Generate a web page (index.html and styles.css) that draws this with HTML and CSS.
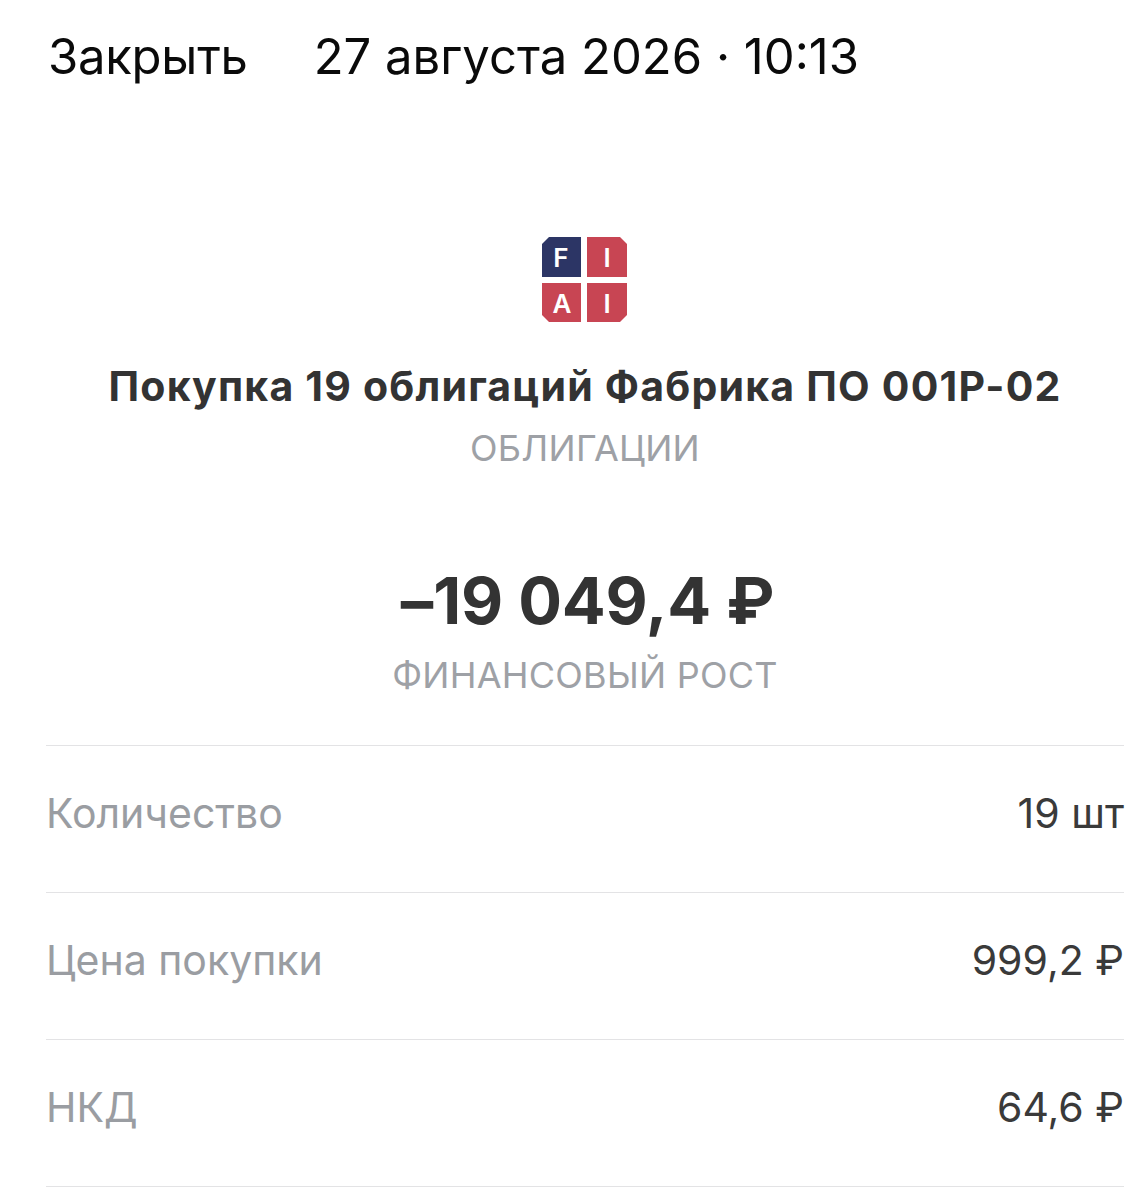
FILE: index.html
```html
<!DOCTYPE html>
<html lang="ru">
<head>
<meta charset="utf-8">
<title>Операция</title>
<link rel="stylesheet" href="styles.css">
</head>
<body>
<div class="page">
  <header class="top">
    <span class="close">Закрыть</span>
    <span class="date">27 августа 2026 · 10:13</span>
  </header>
  <section class="hero">
    <svg class="logo" width="86" height="86" viewBox="0 0 86 86" aria-hidden="true">
      <path class="navy" d="M7 0H39V40H0V7Z"/>
      <path class="red" d="M45 0H78L85 7V40H45Z"/>
      <path class="red" d="M0 46H39V85H7L0 78Z"/>
      <path class="red" d="M45 46H85V78L78 85H45Z"/>
      <text x="19" y="30" class="mark">F</text>
      <text x="65" y="30" class="mark">I</text>
      <text x="20" y="76" class="mark">A</text>
      <text x="65" y="76" class="mark">I</text>
    </svg>
    <h1 class="title">Покупка 19 облигаций Фабрика ПО 001Р-02</h1>
    <div class="sub">ОБЛИГАЦИИ</div>
    <div class="amount">–19 049,4 ₽</div>
    <div class="sub account">ФИНАНСОВЫЙ РОСТ</div>
  </section>
  <section class="rows">
    <div class="row"><span class="label">Количество</span><span class="value">19 шт</span></div>
    <div class="row"><span class="label">Цена покупки</span><span class="value">999,2 ₽</span></div>
    <div class="row"><span class="label">НКД</span><span class="value">64,6 ₽</span></div>
  </section>
</div>
</body>
</html>
```
FILE: styles.css
```css
* { box-sizing: border-box; }
html, body { margin: 0; padding: 0; background: #fff; }
body { font-family: Inter, "Liberation Sans", sans-serif; overflow: hidden; }
.page { width: 1148px; height: 1193px; overflow: hidden; }
.top {
  display: flex;
  align-items: center;
  gap: 66px;
  height: 113px;
  padding-left: 48px;
  font-size: 49px;
  line-height: 113px;
  color: #0a0a0a;
}
.close { letter-spacing: -0.25px; }
.hero { display: flex; flex-direction: column; align-items: center; padding: 124px 0 0 22px; }
.logo { display: block; }
.navy { fill: #2c3565; }
.red { fill: #c84553; }
.mark { fill: #fff; font-size: 26px; font-weight: 600; text-anchor: middle; font-family: Inter, "Liberation Sans", sans-serif; }
.title {
  margin: 38px 0 0;
  font-size: 41px;
  line-height: 50px;
  font-weight: 700;
  color: #333;
  white-space: nowrap;
  letter-spacing: 1.2px;
}
.sub { font-size: 36px; line-height: 44px; color: #9ea1a6; margin-top: 15px; letter-spacing: 0.25px; }
.amount { margin: 92px 0 0 5px; font-size: 65px; line-height: 78px; font-weight: 700; color: #333; white-space: nowrap; letter-spacing: -0.2px; }
.account { margin-top: 13px; }
.rows { margin: 48px 24px 0 46px; }
.row {
  display: flex;
  justify-content: space-between;
  align-items: center;
  height: 147px;
  border-top: 1px solid #e3e3e5;
  font-size: 41px;
  padding-bottom: 12px;
}
.row:last-child { border-bottom: 1px solid #e3e3e5; height: 148px; }
.label { color: #9a9da2; }
.value { color: #3a3a3a; }
```
